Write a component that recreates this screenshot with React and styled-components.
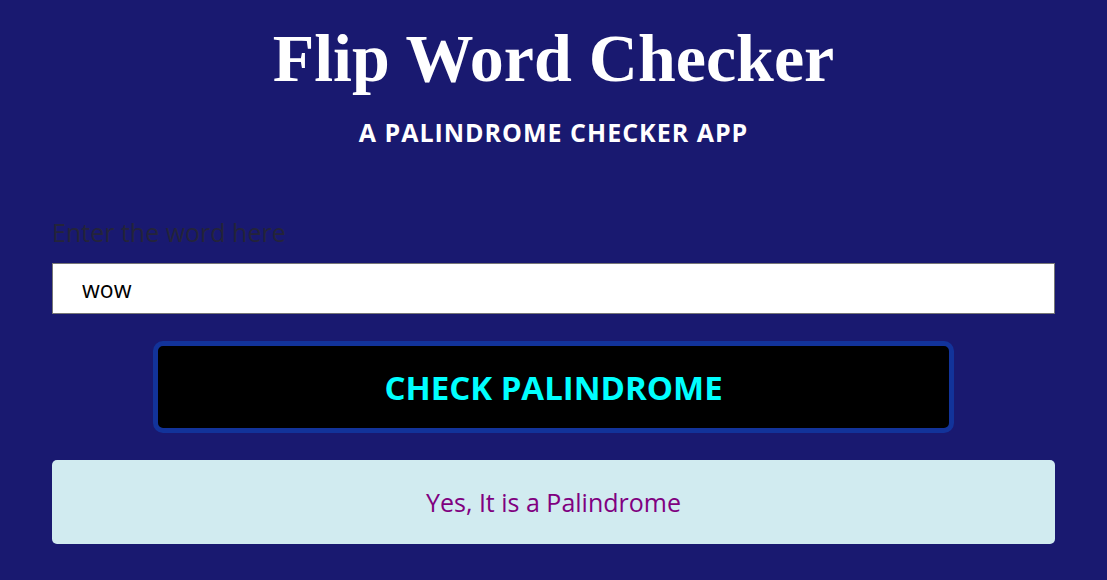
import React, { useState } from "react";
import styled, { createGlobalStyle } from "styled-components";

const Global = createGlobalStyle`
  html, body { margin: 0; padding: 0; background: #191970; }
  body { font-family: "Open Sans", "Noto Sans", sans-serif; }
`;

const Page = styled.main`
  display: flex;
  flex-direction: column;
  align-items: center;
  padding: 0 52px;
  box-sizing: border-box;
  width: 100%;
`;

const Title = styled.h1`
  margin: 18px 0 0;
  font-family: "Liberation Serif", "Times New Roman", serif;
  font-weight: bold;
  font-size: 68px;
  line-height: 80px;
  color: #fff;
`;

const Subtitle = styled.h2`
  margin: 19px 0 0;
  font-size: 25px;
  line-height: 30px;
  letter-spacing: 1px;
  font-weight: bold;
  color: #fff;
`;

const Form = styled.form`
  width: 100%;
  display: flex;
  flex-direction: column;
  align-items: center;
  margin-top: 69px;
`;

const Label = styled.label`
  align-self: stretch;
  font-size: 25px;
  line-height: 32px;
  color: #24243a;
`;

const Input = styled.input`
  align-self: stretch;
  box-sizing: border-box;
  margin-top: 15px;
  height: 51px;
  border: 1px solid #767676;
  border-radius: 0;
  padding: 0 29px;
  font-family: inherit;
  font-size: 23px;
  color: #000;
  outline: none;
`;

const Button = styled.button`
  box-sizing: border-box;
  margin-top: 27px;
  width: 801px;
  height: 92px;
  background: #000;
  border: 5px solid #12339a;
  border-radius: 10px;
  color: #00ffff;
  font-family: inherit;
  font-weight: bold;
  font-size: 33px;
  cursor: pointer;
`;

const Result = styled.div`
  align-self: stretch;
  margin-top: 27px;
  height: 84px;
  display: flex;
  align-items: center;
  justify-content: center;
  background: #d1ebf0;
  border-radius: 5px;
  color: #800080;
  font-size: 25px;
`;

export default function App() {
  const [word, setWord] = useState("wow");
  return (
    <>
      <Global />
      <Page>
        <Title>Flip Word Checker</Title>
        <Subtitle>A PALINDROME CHECKER APP</Subtitle>
        <Form onSubmit={(e) => e.preventDefault()}>
          <Label htmlFor="word">Enter the word here</Label>
          <Input id="word" value={word} onChange={(e) => setWord(e.target.value)} />
          <Button type="submit">CHECK PALINDROME</Button>
          <Result>Yes, It is a Palindrome</Result>
        </Form>
      </Page>
    </>
  );
}
